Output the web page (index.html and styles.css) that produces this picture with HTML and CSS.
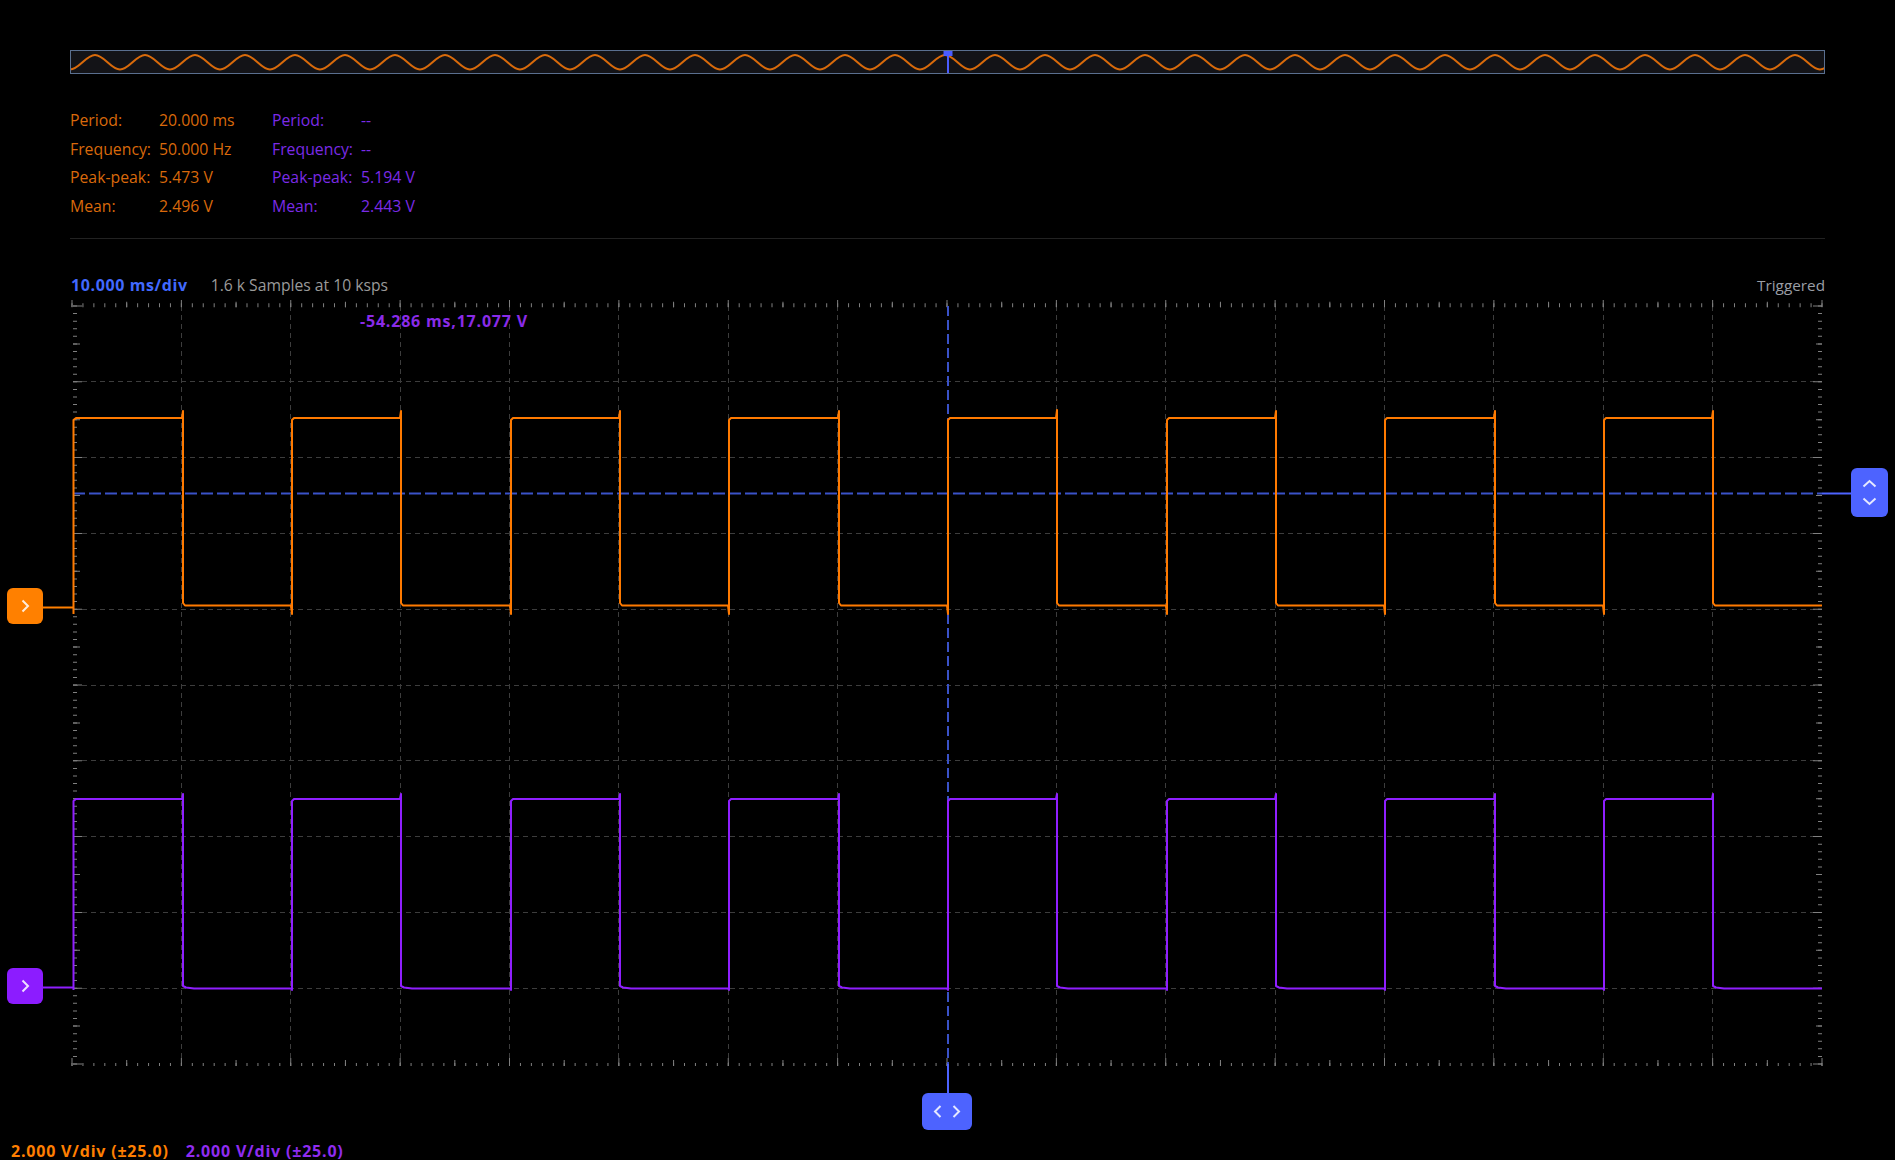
FILE: index.html
```html
<!DOCTYPE html>
<html>
<head>
<meta charset="utf-8">
<link rel="stylesheet" href="styles.css">
</head>
<body>
<div class="overview">
  <svg class="overview-svg" width="1753" height="22" viewBox="71 51 1753 22">
    <defs>
      <pattern id="sine" patternUnits="userSpaceOnUse" x="70" y="51" width="50" height="22">
        <path d="M0,18.5 C9.1,18.5 15.9,4 25,4 S40.9,18.5 50,18.5" fill="none" stroke="#d96a0a" stroke-width="2"/>
      </pattern>
    </defs>
    <rect x="71" y="51" width="1753" height="22" fill="url(#sine)"/>
    <rect x="943.5" y="51" width="9" height="5" fill="#4a5cff"/>
    <rect x="947" y="51" width="2" height="22" fill="#4a5cff"/>
  </svg>
</div>

<div class="stats">
  <span class="o">Period:</span><span class="o">20.000 ms</span><span class="p">Period:</span><span class="p">--</span>
  <span class="o">Frequency:</span><span class="o">50.000 Hz</span><span class="p">Frequency:</span><span class="p">--</span>
  <span class="o">Peak-peak:</span><span class="o">5.473 V</span><span class="p">Peak-peak:</span><span class="p">5.194 V</span>
  <span class="o">Mean:</span><span class="o">2.496 V</span><span class="p">Mean:</span><span class="p">2.443 V</span>
</div>

<div class="separator"></div>

<div class="header">
  <span class="timebase">10.000 ms/div</span>
  <span class="samples">1.6 k Samples at 10 ksps</span>
  <span class="triggered">Triggered</span>
</div>

<div class="plot">
  <svg class="plot-svg" width="1895" height="846" viewBox="0 294 1895 846">
    <g shape-rendering="crispEdges" stroke="#3d3d3d" stroke-width="1" stroke-dasharray="5 4" fill="none">
      <path d="M181.5,306V1066 M290.5,306V1066 M400.5,306V1066 M509.5,306V1066 M618.5,306V1066 M728.5,306V1066 M837.5,306V1066 M1056.5,306V1066 M1165.5,306V1066 M1275.5,306V1066 M1384.5,306V1066 M1493.5,306V1066 M1603.5,306V1066 M1712.5,306V1066"/>
      <path d="M73,381.5H1822 M73,457.5H1822 M73,533.5H1822 M73,609.5H1822 M73,685.5H1822 M73,760.5H1822 M73,836.5H1822 M73,912.5H1822 M73,988.5H1822"/>
    </g>
    <g stroke="#808080" fill="none">
      <line x1="71.5" y1="305.3" x2="1823" y2="305.3" stroke-width="4" stroke-dasharray="1 9.9375"/>
      <line x1="126.2" y1="304.5" x2="1823" y2="304.5" stroke-width="5.5" stroke-dasharray="1 108.375"/>
      <line x1="71.5" y1="303.5" x2="1823" y2="303.5" stroke-width="7" stroke-dasharray="1 108.375"/>
      <line x1="71.5" y1="1064.5" x2="1823" y2="1064.5" stroke-width="3" stroke-dasharray="1 9.9375"/>
      <line x1="126.2" y1="1063" x2="1823" y2="1063" stroke-width="6" stroke-dasharray="1 108.375"/>
      <line x1="71.5" y1="1062" x2="1823" y2="1062" stroke-width="8" stroke-dasharray="1 108.375"/>
      <line x1="75" y1="305.5" x2="75" y2="1066" stroke-width="4" stroke-dasharray="1 6.58"/>
      <line x1="76.5" y1="343.4" x2="76.5" y2="1066" stroke-width="7" stroke-dasharray="1 74.8"/>
      <line x1="77.5" y1="305.5" x2="77.5" y2="1066" stroke-width="9" stroke-dasharray="1 74.8"/>
      <line x1="1820" y1="305.5" x2="1820" y2="1066" stroke-width="4" stroke-dasharray="1 6.58"/>
      <line x1="1819" y1="343.4" x2="1819" y2="1066" stroke-width="6" stroke-dasharray="1 74.8"/>
      <line x1="1817.5" y1="305.5" x2="1817.5" y2="1066" stroke-width="9" stroke-dasharray="1 74.8"/>
    </g>
    <line x1="73" y1="493.5" x2="1822" y2="493.5" stroke="#3a52c8" stroke-width="2" stroke-dasharray="12 4"/>
    <line x1="1822" y1="493.5" x2="1852" y2="493.5" stroke="#4d63ff" stroke-width="2"/>
    <line x1="948" y1="306" x2="948" y2="1064" stroke="#3a52c8" stroke-width="2" stroke-dasharray="10 4"/>
    <line x1="948" y1="1064" x2="948" y2="1095" stroke="#4d63ff" stroke-width="2"/>
    <line x1="42" y1="607.5" x2="73" y2="607.5" stroke="#ff7f00" stroke-width="2"/>
    <line x1="42" y1="987.5" x2="73" y2="987.5" stroke="#8f1fff" stroke-width="2"/>
    <path fill="none" stroke="#ff7a00" stroke-width="2" stroke-linejoin="round" d="M73.5,614 V420 L76,418 H182 L183,411 V603 L185,605.5 H291 L292,614 V420 L294,418 H400 L401,411 V603 L403,605.5 H510 L511,614 V420 L513,418 H619 L620,411 V603 L622,605.5 H728 L729,614 V420 L731,418 H838 L839,411 V603 L841,605.5 H947 L948,614 V420 L950,418 H1056 L1057,410 V603 L1059,605.5 H1166 L1167,614 V420 L1169,418 H1275 L1276,411 V603 L1278,605.5 H1384 L1385,614 V420 L1387,418 H1494 L1495,411 V603 L1497,605.5 H1603 L1604,614 V420 L1606,418 H1712 L1713,411 V603 L1715,605.5 H1822"/>
    <path fill="none" stroke="#8f1fff" stroke-width="2" stroke-linejoin="round" d="M73.5,990 V801 L76,799 H182 L183,794 V986 L186,987.5 L194,988.5 H291 L292,990 V801 L294,799 H400 L401,794 V986 L404,987.5 L412,988.5 H510 L511,990 V801 L513,799 H619 L620,794 V986 L623,987.5 L631,988.5 H728 L729,990 V801 L731,799 H838 L839,794 V986 L842,987.5 L850,988.5 H947 L948,990 V801 L950,799 H1056 L1057,794 V986 L1060,987.5 L1068,988.5 H1166 L1167,990 V801 L1169,799 H1275 L1276,794 V986 L1279,987.5 L1287,988.5 H1384 L1385,990 V801 L1387,799 H1494 L1495,794 V986 L1498,987.5 L1506,988.5 H1603 L1604,990 V801 L1606,799 H1712 L1713,794 V986 L1716,987.5 L1724,988.5 H1822"/>
  </svg>

  <div class="cursor-label">-54.286 ms,17.077 V</div>

  <div class="marker marker-ch1">
    <svg width="36" height="36" viewBox="0 0 36 36"><polyline points="15.5,12.5 21,18 15.5,23.5" fill="none" stroke="rgba(255,255,255,0.85)" stroke-width="2"/></svg>
  </div>
  <div class="marker marker-ch2">
    <svg width="36" height="36" viewBox="0 0 36 36"><polyline points="15.5,12.5 21,18 15.5,23.5" fill="none" stroke="rgba(255,255,255,0.85)" stroke-width="2"/></svg>
  </div>
  <div class="marker marker-trig">
    <svg width="37" height="49" viewBox="0 0 37 49"><polyline points="12.5,18.5 18.5,13 24.5,18.5" fill="none" stroke="rgba(255,255,255,0.85)" stroke-width="2"/><polyline points="12.5,30.5 18.5,36 24.5,30.5" fill="none" stroke="rgba(255,255,255,0.85)" stroke-width="2"/></svg>
  </div>
  <div class="marker marker-time">
    <svg width="50" height="37" viewBox="0 0 50 37"><polyline points="18.5,13 13,18.5 18.5,24" fill="none" stroke="rgba(255,255,255,0.85)" stroke-width="2"/><polyline points="31.5,13 37,18.5 31.5,24" fill="none" stroke="rgba(255,255,255,0.85)" stroke-width="2"/></svg>
  </div>
</div>

<div class="footer">
  <span class="vdiv-o">2.000 V/div (±25.0)</span>
  <span class="vdiv-p">2.000 V/div (±25.0)</span>
</div>
</body>
</html>
```

FILE: styles.css
```css
html, body {
  margin: 0;
  padding: 0;
  background: #000;
}
body {
  width: 1895px;
  height: 1160px;
  overflow: hidden;
  font-family: "Open Sans", "Noto Sans", sans-serif;
  font-size: 16px;
  color: #999;
}
.overview {
  margin: 50px 0 0 70px;
  width: 1755px;
  height: 24px;
  box-sizing: border-box;
  border: 1px solid #5a6f8f;
  background: #131317;
}
.overview-svg {
  display: block;
}
.stats {
  margin: 32px 0 0 70px;
  display: grid;
  grid-template-columns: 89px 113px 89px auto;
  line-height: 28.5px;
  font-size: 15.8px;
  letter-spacing: 0;
}
.stats .o { color: #d9690b; }
.stats .p { color: #7b2be6; }
.separator {
  margin: 18px 70px 0 70px;
  height: 1px;
  background: #222;
}
.header {
  margin-top: 36px;
  padding: 0 70px 0 71px;
  height: 20px;
  line-height: 20px;
  display: flex;
  align-items: center;
}
.timebase {
  color: #4169ff;
  font-weight: 700;
  font-size: 16px;
  letter-spacing: 0.6px;
}
.samples {
  margin-left: 23px;
  color: #9a9a9a;
  font-size: 15.7px;
}
.triggered {
  margin-left: auto;
  color: #9a9ea6;
  font-size: 15.3px;
}
.plot {
  position: relative;
  height: 845px;
}
.plot-svg {
  display: block;
  margin-top: -1px;
}
.cursor-label {
  position: absolute;
  left: 360px;
  top: 17px;
  line-height: 20px;
  color: #8a2be8;
  font-weight: 700;
  font-size: 16px;
  letter-spacing: 0.8px;
}
.marker {
  position: absolute;
  border-radius: 6px;
}
.marker svg { display: block; }
.marker-ch1 {
  left: 7px;
  top: 294px;
  width: 36px;
  height: 36px;
  background: #ff8000;
}
.marker-ch2 {
  left: 7px;
  top: 674px;
  width: 36px;
  height: 36px;
  background: #8c1cff;
}
.marker-trig {
  left: 1851px;
  top: 174px;
  width: 37px;
  height: 49px;
  background: #4d63ff;
}
.marker-time {
  left: 922px;
  top: 799px;
  width: 50px;
  height: 37px;
  background: #4d63ff;
}
.footer {
  margin-top: 2px;
  padding-left: 11px;
  height: 18px;
  line-height: 20px;
  font-weight: 700;
  font-size: 16px;
  letter-spacing: 0.8px;
  display: flex;
  gap: 17px;
}
.vdiv-o { color: #ff7f00; }
.vdiv-p { color: #8f2cf0; }
```
